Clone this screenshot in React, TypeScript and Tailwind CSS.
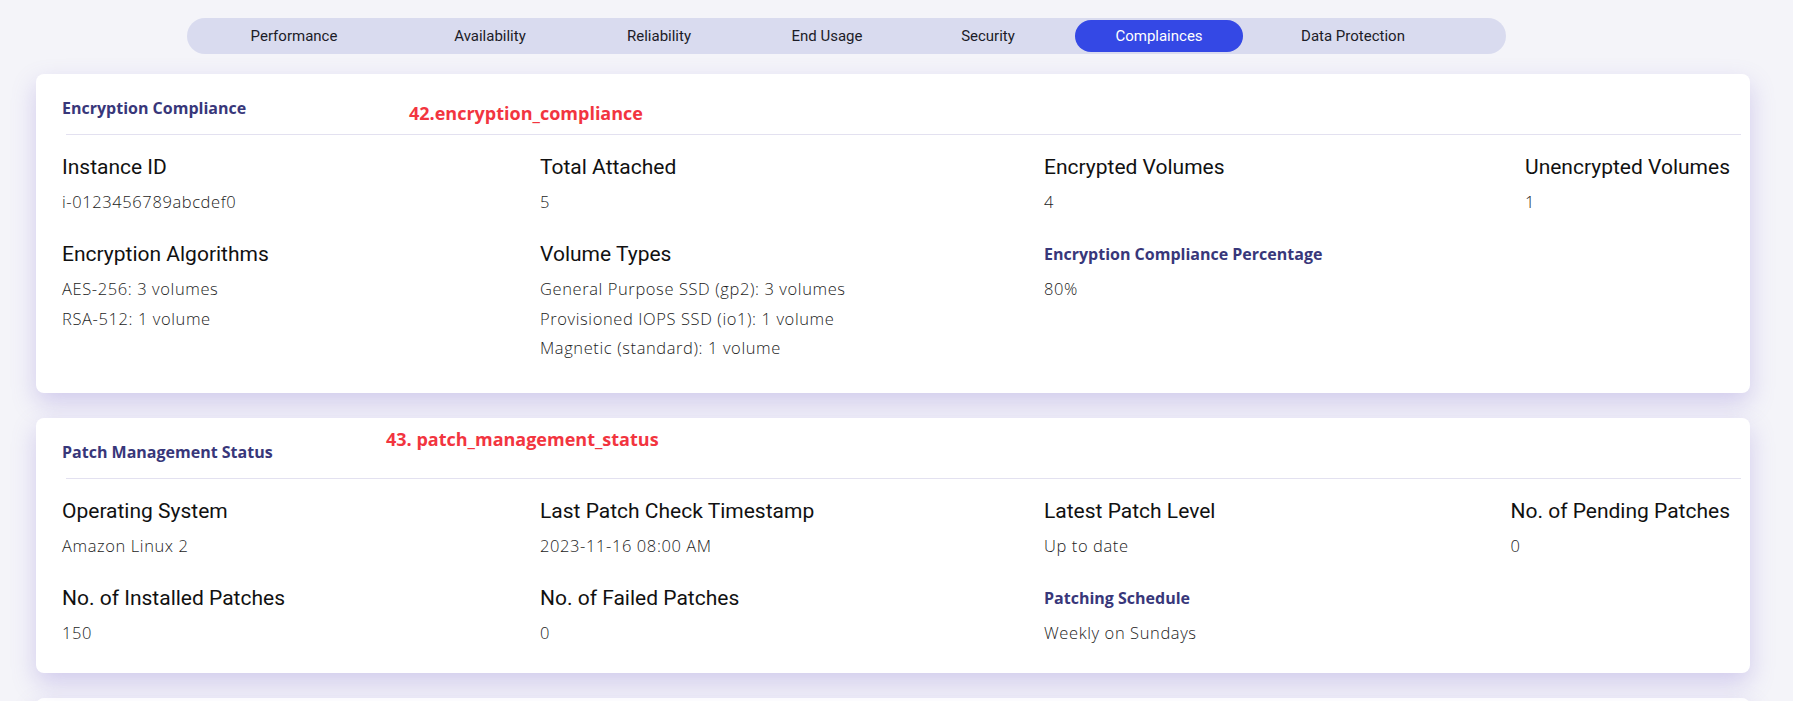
import React from "react";

type Field = { label: string; values: string[]; accent?: boolean };

const tabs = [
  { label: "Performance", cls: "w-[214px]" },
  { label: "Availability", cls: "w-[178px]" },
  { label: "Reliability", cls: "w-[160px]" },
  { label: "End Usage", cls: "w-[176px]" },
  { label: "Security", cls: "w-[146px]" },
  { label: "Complainces", cls: "w-[168px] ml-[14px]", active: true },
  { label: "Data Protection", cls: "w-[220px]" },
];

const encryption: Field[] = [
  { label: "Instance ID", values: ["i-0123456789abcdef0"] },
  { label: "Total Attached", values: ["5"] },
  { label: "Encrypted Volumes", values: ["4"] },
  { label: "Unencrypted Volumes", values: ["1"] },
  { label: "Encryption Algorithms", values: ["AES-256: 3 volumes", "RSA-512: 1 volume"] },
  {
    label: "Volume Types",
    values: [
      "General Purpose SSD (gp2): 3 volumes",
      "Provisioned IOPS SSD (io1): 1 volume",
      "Magnetic (standard): 1 volume",
    ],
  },
  { label: "Encryption Compliance Percentage", values: ["80%"], accent: true },
];

const patch: Field[] = [
  { label: "Operating System", values: ["Amazon Linux 2"] },
  { label: "Last Patch Check Timestamp", values: ["2023-11-16 08:00 AM"] },
  { label: "Latest Patch Level", values: ["Up to date"] },
  { label: "No. of Pending Patches", values: ["0"] },
  { label: "No. of Installed Patches", values: ["150"] },
  { label: "No. of Failed Patches", values: ["0"] },
  { label: "Patching Schedule", values: ["Weekly on Sundays"], accent: true },
];

const titleFont = { fontFamily: '"Open Sans", "Liberation Sans", sans-serif' };
const labelFont = { fontFamily: 'Roboto, "Liberation Sans", sans-serif' };
const valueFont = { fontFamily: '"Open Sans", "Liberation Sans", sans-serif' };

function Cell({ f }: { f: Field }) {
  return (
    <div className="flex flex-col">
      {f.accent ? (
        <div style={titleFont} className="text-[16px] leading-[24px] font-bold text-[#38377a]">
          {f.label}
        </div>
      ) : (
        <div style={labelFont} className="text-[21px] leading-[24px] text-[#111111]">
          {f.label}
        </div>
      )}
      <div className="mt-[8px] flex flex-col">
        {f.values.map((v) => (
          <div
            key={v}
            style={valueFont}
            className="text-[16.5px] leading-[29.5px] font-light tracking-[0.6px] text-[#1c1c1c] whitespace-nowrap"
          >
            {v}
          </div>
        ))}
      </div>
    </div>
  );
}

function Card({
  title,
  note,
  noteCls,
  fields,
  padCls,
}: {
  title: string;
  note: string;
  noteCls: string;
  fields: Field[];
  padCls: string;
}) {
  return (
    <div
      className={`relative bg-white rounded-[8px] shadow-[0_10px_24px_rgba(130,110,210,0.3)] pl-[26px] pr-[9px] pt-[24px] ${padCls}`}
    >
      <div style={titleFont} className="text-[16px] leading-[20px] font-bold text-[#38377a]">
        {title}
      </div>
      <div
        style={titleFont}
        className={`absolute text-[18px] leading-[24px] font-bold text-[#f2353f] ${noteCls}`}
      >
        {note}
      </div>
      <div className="mt-[16px] ml-[4px] h-px bg-[#e3e1f0]" />
      <div className="mt-[20px] mr-[11px] grid grid-cols-[478px_504px_1fr_auto] gap-y-[25.5px]">
        {fields.map((f) => (
          <Cell key={f.label} f={f} />
        ))}
      </div>
    </div>
  );
}

export default function App() {
  return (
    <div className="relative w-full min-h-[701px] bg-[#f4f4f9] overflow-hidden">
      <div className="ml-[187px] pt-[18px]">
        <div className="w-[1319px] h-[36px] rounded-full bg-[#d9dbef] flex items-center">
          {tabs.map((t) => (
            <div
              key={t.label}
              style={labelFont}
              className={`${t.cls} h-[32px] flex items-center justify-center text-[15px] ${
                t.active ? "bg-[#3448e5] text-white rounded-full" : "text-[#1c1c28]"
              }`}
            >
              {t.label}
            </div>
          ))}
        </div>
      </div>
      <div className="ml-[36px] mt-[20px] w-[1714px] flex flex-col gap-[25px]">
        <Card
          title="Encryption Compliance"
          note="42.encryption_compliance"
          noteCls="left-[373px] top-[27px]"
          fields={encryption}
          padCls="pb-[30px]"
        />
        <Card
          title="Patch Management Status"
          note="43. patch_management_status"
          noteCls="left-[350px] top-[9px]"
          fields={patch}
          padCls="pb-[26px]"
        />
        <div className="h-[260px] bg-white rounded-[8px] shadow-[0_10px_24px_rgba(130,110,210,0.3)]" />
      </div>
    </div>
  );
}
